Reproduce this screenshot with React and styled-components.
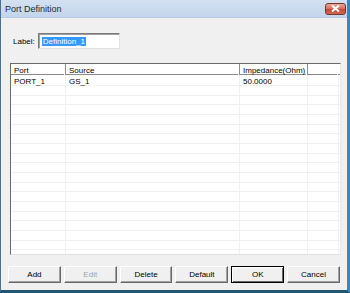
import React from 'react'
import styled, { createGlobalStyle } from 'styled-components'

const Global = createGlobalStyle`
  html, body { margin: 0; padding: 0; background: #f0f0f0; }
  * { box-sizing: border-box; }
`

const Window = styled.div`
  width: 350px; height: 293px;
  display: flex; flex-direction: column;
  background: #f0f0f0;
  border-left: 1px solid #4b6f8e;
  border-right: 3px solid #3a86c0;
  border-bottom: 3px solid #1f5670;
  font-family: "Liberation Sans", Arial, sans-serif;
  font-size: 8px;
  color: #000;
  overflow: hidden;
`
const TitleBar = styled.div`
  height: 18px; flex: none;
  display: flex; align-items: center; justify-content: space-between;
  padding: 0 1px 0 4px;
  background: linear-gradient(#d3e1f1, #c2d5ec);
  border-bottom: 1px solid #b7cce4;
`
const TitleText = styled.span`
  font-size: 9px; color: #1b2a3a;
`
const CloseButton = styled.div`
  width: 21px; height: 12px;
  display: flex; align-items: center; justify-content: center;
  border: 1px solid #7b3426; border-radius: 3px;
  background: linear-gradient(#e9a99c 0%, #d8715f 45%, #c24a36 55%, #d06a52 100%);
`
const Body = styled.div`
  flex: 1;
  display: flex; flex-direction: column;
  padding: 15px 7px 0 9px;
`
const LabelRow = styled.div`
  display: flex; align-items: center; gap: 3px;
  padding-left: 3px;
  height: 16px;
`
const Input = styled.div`
  width: 82px; height: 16px;
  background: #fff;
  border-style: solid; border-width: 1px;
  border-color: #7a7a7a #e3e3e3 #e3e3e3 #7a7a7a;
  box-shadow: inset 1px 1px 0 #a0a0a0;
  padding: 3px 0 0 3px;
`
const Selected = styled.span`
  background: #3399ff; color: #fff; padding: 0 1px;
`
const Table = styled.div`
  margin-top: 14px;
  width: 331px; height: 192px;
  background: #fff;
  border-style: solid; border-width: 1px;
  border-color: #6b6b6b #e8e8e8 #e0e0e0 #6b6b6b;
  overflow: hidden;
  display: flex; flex-direction: column;
`
const Row = styled.div`
  display: grid;
  grid-template-columns: 55px 174px 68px 31px;
  height: ${p => p.$h}px; flex: none;
  border-bottom: 1px solid ${p => (p.$head ? '#8a8a8a' : '#f0f0f0')};
  background: #fff;
`
const Cell = styled.div`
  padding: ${p => (p.$pad ? '2px' : '0')} 0 0 3px;
  white-space: nowrap;
  border-right: 1px solid ${p => (p.$head ? (p.$last ? 'transparent' : '#8e8e8e') : '#f0f0f0')};
  ${p => p.$head && 'box-shadow: inset -1px 0 0 #fff;'}
`
const HeadRow = styled(Row)`
  border-top: 1px solid #7d7d7d;
  margin-top: -1px;
`
const ButtonRow = styled.div`
  display: flex; gap: 3px;
  margin-top: 11px;
  margin-left: -2px;
`
const Button = styled.div`
  width: 53px; height: 17px;
  display: flex; align-items: center; justify-content: center;
  background: #f0f0f0;
  color: ${p => (p.$disabled ? '#a3a3a3' : '#000')};
  border-style: solid; border-width: 1px;
  border-color: ${p => (p.$default ? '#000' : '#fff #696969 #696969 #fff')};
  box-shadow: ${p => (p.$default ? 'inset 1px 1px 0 #fff, inset -1px -1px 0 #696969' : 'inset -1px -1px 0 #a0a0a0')};
`

const columns = ['Port', 'Source', 'Impedance(Ohm)', '']
const data = [['PORT_1', 'GS_1', '50.0000', '']]

const App = () => {
  const rows = [...data]
  while (rows.length < 19) rows.push(['', '', '', ''])
  return (
    <Window>
      <Global />
      <TitleBar>
        <TitleText>Port Definition</TitleText>
        <CloseButton>
          <svg width="9" height="7" viewBox="0 0 9 7">
            <path d="M1 0.5 L8 6.5 M8 0.5 L1 6.5" stroke="#fff" strokeWidth="2" />
          </svg>
        </CloseButton>
      </TitleBar>
      <Body>
        <LabelRow>
          <span>Label:</span>
          <Input><Selected>Definition_1</Selected></Input>
        </LabelRow>
        <Table>
          <HeadRow $head $h={12}>
            {columns.map((c, i) => (
              <Cell key={i} $head $pad $last={i === 3}>{c}</Cell>
            ))}
          </HeadRow>
          {rows.map((r, i) => (
            <Row key={i} $h={i === 0 ? 11 : 9.67}>
              {r.map((c, j) => (
                <Cell key={j} $pad={i === 0}>{c}</Cell>
              ))}
            </Row>
          ))}
        </Table>
        <ButtonRow>
          <Button>Add</Button>
          <Button $disabled>Edit</Button>
          <Button>Delete</Button>
          <Button>Default</Button>
          <Button $default>OK</Button>
          <Button>Cancel</Button>
        </ButtonRow>
      </Body>
    </Window>
  )
}

export default App
